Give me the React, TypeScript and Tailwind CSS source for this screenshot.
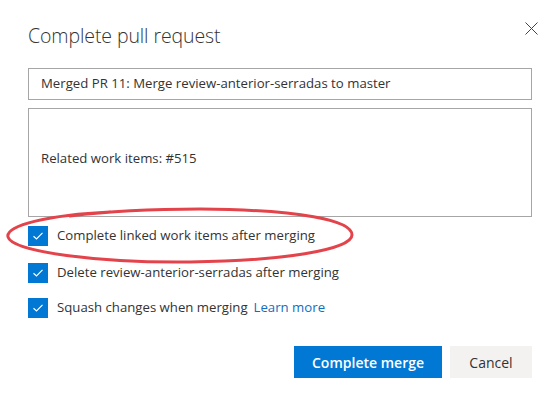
import React from "react";

function Check({ label, extra, className }: { label: string; extra?: React.ReactNode; className?: string }) {
  return (
    <div className={"flex items-center h-[20px] " + (className ?? "")}>
      <div className="w-[20px] h-[20px] bg-[#0078d4] flex items-center justify-center shrink-0">
        <svg width="12" height="10" viewBox="0 0 12 10" fill="none">
          <path d="M1.5 5.2 L4.5 8 L10.5 1.8" stroke="white" strokeWidth="1.2" />
        </svg>
      </div>
      <span className="ml-[9px] text-[13.2px] text-[#333]">{label}</span>
      {extra}
    </div>
  );
}

export default function App() {
  return (
    <div className="relative w-[560px] h-[398px] bg-white overflow-hidden font-['Open_Sans','Noto_Sans',sans-serif]">
      <div className="flex justify-between items-start pl-[28px] pr-[22px] pt-[22px] h-[68px]">
        <h1 className="text-[19.5px] leading-[28px] font-light text-[#333] tracking-[-0.1px]">
          Complete pull request
        </h1>
        <svg width="13" height="13" viewBox="0 0 13 13">
          <path d="M0.5 0.5 L12.5 12.5 M12.5 0.5 L0.5 12.5" stroke="#444" strokeWidth="1" />
        </svg>
      </div>
      <div className="px-[28px]">
        <div className="h-[32px] border border-[#a6a6a6] flex items-center px-[12px] text-[13.2px] text-[#333]">
          Merged PR 11: Merge review-anterior-serradas to master
        </div>
        <div className="mt-[8px] h-[109px] border border-[#a6a6a6] px-[12px] pt-[39px] text-[13.2px] leading-[20px] text-[#333]">
          Related work items: #515
        </div>
        <div className="mt-[9px] flex flex-col">
          <Check label="Complete linked work items after merging" />
          <Check className="mt-[17px]" label="Delete review-anterior-serradas after merging" />
          <Check
            className="mt-[15px]"
            label="Squash changes when merging"
            extra={<span className="ml-[6px] text-[13.2px] text-[#106ebe]">Learn more</span>}
          />
        </div>
        <div className="mt-[28px] flex justify-end gap-[8px]">
          <button className="w-[148px] h-[32px] bg-[#0078d4] text-white text-[14px] font-semibold">
            Complete merge
          </button>
          <button className="w-[82px] h-[32px] bg-[#f3f2f1] text-[#333] text-[14px]">
            Cancel
          </button>
        </div>
      </div>
      <svg className="absolute left-0 top-0 pointer-events-none" width="560" height="398">
        <path
          d="M110 212 C 50 215, 5 225, 8 237 C 12 252, 100 263, 190 262 C 280 261, 352 250, 352 235 C 352 220, 300 210, 200 209 C 150 209, 110 211, 70 216"
          fill="none"
          stroke="#e3444b"
          strokeWidth="3"
          strokeLinecap="round"
        />
      </svg>
    </div>
  );
}
